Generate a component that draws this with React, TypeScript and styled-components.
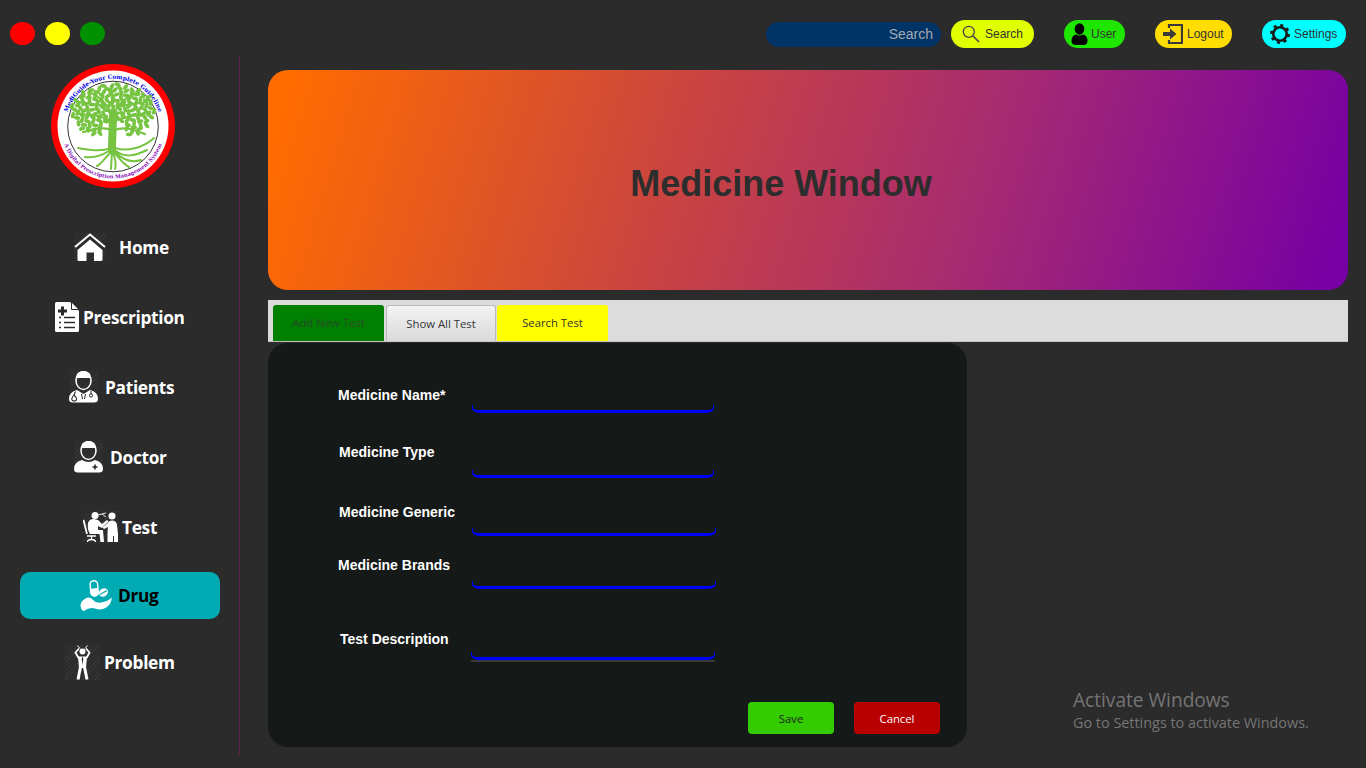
import React from "react";
import styled, { createGlobalStyle } from "styled-components";

const Global = createGlobalStyle`
  html, body { margin: 0; padding: 0; background: #2b2b2b; }
  * { box-sizing: border-box; }
`;

const Page = styled.div`
  position: relative;
  width: 1366px;
  height: 768px;
  overflow: hidden;
  background: #2b2b2b;
  font-family: "Liberation Sans", Arial, sans-serif;
`;

const TopBar = styled.header`
  display: flex;
  align-items: flex-start;
  height: 55px;
  padding: 20px 20px 0 10px;
`;

const Lights = styled.div`
  display: flex;
  gap: 10px;
  padding-top: 2px;
  margin-right: auto;
`;

const Light = styled.span<{ $color: string }>`
  display: block;
  width: 25px;
  height: 23px;
  border-radius: 50%;
  background: ${(p) => p.$color};
`;

const SearchField = styled.div`
  width: 175px;
  height: 25px;
  margin-top: 2px;
  padding-right: 8px;
  border-radius: 13px;
  background: #003366;
  color: #a3abb3;
  font-size: 14px;
  line-height: 25px;
  text-align: right;
`;

const Pill = styled.button<{ $bg: string; $width: number; $gap: number; $pad: number }>`
  display: flex;
  align-items: center;
  width: ${(p) => p.$width}px;
  height: 28px;
  margin-left: ${(p) => p.$gap}px;
  padding: 0 0 0 ${(p) => p.$pad}px;
  border: none;
  border-radius: 14px;
  background: ${(p) => p.$bg};
  color: #333333;
  font-family: "Liberation Sans", Arial, sans-serif;
  font-size: 12px;
`;

const PillIcon = styled.svg<{ $gap: number }>`
  flex: none;
  margin-right: ${(p) => p.$gap}px;
`;

const Body = styled.div`
  display: flex;
  height: 700px;
`;

const Sidebar = styled.aside`
  flex: none;
  display: flex;
  flex-direction: column;
  align-items: flex-start;
  width: 240px;
  height: 700px;
  padding: 9px 0 0 20px;
  border-right: 1px solid #5f2449;
`;

const LogoSvg = styled.svg`
  display: block;
  margin-left: 31px;
  margin-bottom: 36px;
`;

const NavItem = styled.a<{ $active?: boolean; $top: number; $pad: number; $gap: number }>`
  display: flex;
  align-items: center;
  width: 200px;
  height: 47px;
  margin-top: ${(p) => p.$top}px;
  padding-left: ${(p) => p.$pad}px;
  padding-bottom: 1px;
  gap: ${(p) => p.$gap}px;
  border-radius: 10px;
  background: ${(p) => (p.$active ? "#00abb3" : "transparent")};
  color: ${(p) => (p.$active ? "#000000" : "#ffffff")};
  font-family: "Open Sans", sans-serif;
  font-size: 17.3px;
  font-weight: 700;
  letter-spacing: -0.3px;
`;

const NavIconBox = styled.span<{ $hatch?: boolean }>`
  display: flex;
  flex: none;
  background: ${(p) =>
    p.$hatch
      ? "repeating-linear-gradient(135deg, #363636 0 1px, transparent 1px 3px)"
      : "none"};
`;

const Main = styled.main`
  flex: 1;
  padding: 15px 18px 0 28px;
`;

const Hero = styled.section`
  display: flex;
  align-items: center;
  justify-content: center;
  height: 220px;
  padding: 8px 54px 0 0;
  border-radius: 20px;
  background: linear-gradient(107deg, #ff6c00 2%, #cc463d 36%, #a62a72 66%, #7600a3 98%);
`;

const HeroTitle = styled.h1`
  margin: 0;
  color: #2d2d2d;
  font-family: "Liberation Sans", Arial, sans-serif;
  font-size: 36px;
  font-weight: 700;
`;

const TabStrip = styled.nav`
  display: flex;
  align-items: flex-end;
  height: 42px;
  margin-top: 10px;
  padding-left: 5px;
  background: #dcdcdc;
  border-bottom: 1px solid #c4c4c4;
`;

const Tab = styled.div<{ $variant: "green" | "plain" | "yellow" }>`
  width: ${(p) => (p.$variant === "plain" ? 110 : 111)}px;
  height: 36px;
  margin-right: ${(p) => (p.$variant === "green" ? 2 : 1)}px;
  border-radius: 3px 3px 0 0;
  border: ${(p) => (p.$variant === "plain" ? "1px solid #b9b9b9" : "none")};
  border-bottom: none;
  background: ${(p) =>
    p.$variant === "green"
      ? "#008000"
      : p.$variant === "yellow"
        ? "#ffff00"
        : "linear-gradient(#f3f3f3, #dadada)"};
  color: ${(p) => (p.$variant === "green" ? "#2a4a2a" : "#333333")};
  font-family: "Open Sans", sans-serif;
  font-size: 11.3px;
  line-height: 36px;
  text-align: center;
`;

const FormCard = styled.section`
  display: flex;
  flex-direction: column;
  width: 699px;
  height: 404px;
  margin-top: 1px;
  padding: 40px 27px 13px 0;
  border-radius: 20px;
  background: #151917;
`;

const FieldRow = styled.div<{ $top: number; $pad: number }>`
  display: flex;
  align-items: flex-start;
  height: 30px;
  margin-top: ${(p) => p.$top}px;
  padding-left: ${(p) => p.$pad}px;
`;

const FieldLabel = styled.label<{ $width: number; $nudge: number }>`
  flex: none;
  width: ${(p) => p.$width}px;
  margin-top: ${(p) => p.$nudge}px;
  color: #ffffff;
  font-size: 14px;
  font-weight: 700;
  line-height: 16px;
`;

const FieldBox = styled.div<{ $width: number; $rule?: boolean }>`
  position: relative;
  flex: none;
  width: ${(p) => p.$width}px;
  height: ${(p) => (p.$rule ? 32 : 30)}px;
  border-bottom: ${(p) => (p.$rule ? "2px solid #3a3a3a" : "none")};

  &::after {
    content: "";
    position: absolute;
    left: 0;
    right: 0;
    bottom: 0;
    height: 5px;
    border: 1px solid #0000ff;
    border-top: none;
    border-bottom-width: 3px;
    border-radius: 0 0 8px 8px / 0 0 5px 5px;
    pointer-events: none;
  }
`;

const FieldInput = styled.input`
  display: block;
  width: 100%;
  height: 27px;
  padding: 0;
  border: none;
  outline: none;
  background: transparent;
  color: #ffffff;
`;

const Actions = styled.div`
  display: flex;
  justify-content: flex-end;
  gap: 20px;
  margin-top: auto;
`;

const ActionButton = styled.button<{ $bg: string; $fg: string }>`
  width: 86px;
  height: 32px;
  border: none;
  border-radius: 4px;
  background: ${(p) => p.$bg};
  color: ${(p) => p.$fg};
  font-family: "Open Sans", sans-serif;
  font-size: 11.3px;
`;

const Watermark = styled.div`
  position: absolute;
  left: 1073px;
  top: 688px;
  color: #757575;
  font-family: "Open Sans", sans-serif;
  font-size: 14.4px;
  line-height: 20px;
`;

const WatermarkTitle = styled.div`
  font-size: 19.1px;
  line-height: 25px;
`;

const Logo = () => {
  const leaves: React.ReactElement[] = [];
  for (let i = 0; i < 150; i++) {
    const r = Math.sqrt(i / 150);
    const a = i * 2.39996;
    const x = 62 + r * 42 * Math.cos(a);
    const y = 47 + r * 27 * Math.sin(a);
    if (Math.abs(x - 62) < 12 && y > 58) continue;
    leaves.push(
      <ellipse
        key={i}
        cx={x}
        cy={y}
        rx={3.3}
        ry={1.9}
        transform={`rotate(${(i * 47) % 180} ${x} ${y})`}
        fill="#76c442"
      />
    );
  }
  return (
    <LogoSvg width={124} height={124} viewBox="0 0 124 124" role="img" aria-label="MediGuide logo">
      <circle cx={62} cy={62} r={62} fill="#ff0000" />
      <circle cx={62} cy={62} r={55.5} fill="#ffffff" />
      <circle cx={62} cy={62.5} r={45.3} fill="none" stroke="#000000" strokeWidth={0.8} />
      <defs>
        <path id="logoTop" d="M 16.3 49.4 A 47.5 47.5 0 0 1 107.7 49.4" />
        <path id="logoBottom" d="M 11.8 76 A 52 52 0 0 0 112.2 76" />
      </defs>
      <text fill="#0000e6" fontFamily="'DejaVu Serif', serif" fontSize={5.9} fontWeight={700}>
        <textPath href="#logoTop" startOffset="50%" textAnchor="middle">
          MediGuide-Your Complete Guideline
        </textPath>
      </text>
      <text fill="#8a12b8" fontFamily="'DejaVu Serif', serif" fontSize={5.2} fontWeight={700}>
        <textPath href="#logoBottom" startOffset="50%" textAnchor="middle">
          A Digital Prescription Management System
        </textPath>
      </text>
      <g fill="none" stroke="#76c442" strokeLinecap="round">
        <path d="M62 50 C 62 62 61 76 61 86" strokeWidth={8} />
        <path d="M62 58 C 52 52 40 50 26 50M62 58 C 72 52 86 52 98 48M61 50 C 56 40 48 32 38 28M63 50 C 68 38 76 32 88 28M62 48 L 60 24M56 42 L 28 38M68 42 L 96 38M61 66 C 52 62 42 66 32 68M63 66 C 74 62 84 66 94 70" strokeWidth={2.2} />
        <path d="M60 84 C 50 88 38 86 27 84M64 84 C 76 88 92 84 103 74M58 87 C 50 92 42 94 34 93M65 87 C 74 94 84 92 96 86M60 88 C 54 94 50 100 46 102M63 88 C 68 94 72 100 78 103M61 88 L 60 105M62 88 C 64 94 66 100 64 105M64 88 C 74 98 84 98 90 96" strokeWidth={2} />
      </g>
      {leaves}
    </LogoSvg>
  );
};

const HomeIcon = () => (
  <svg width={32} height={28} viewBox="0 0 32 28">
    <path d="M1 14 L16 1.5 L31 14" fill="none" stroke="#fff" strokeWidth={2} />
    <path d="M3.5 17 L16 6.5 L28.5 17 V26.5 Q28.5 28 27 28 H20 V19.5 H12.5 V28 H5 Q3.5 28 3.5 26.5 Z" fill="#fff" />
  </svg>
);

const RxIcon = () => (
  <svg width={24} height={30} viewBox="0 0 24 30">
    <path d="M1.5 0 H15 L24 9 V28.5 Q24 30 22.5 30 H1.5 Q0 30 0 28.5 V1.5 Q0 0 1.5 0 Z" fill="#fff" />
    <path d="M16 0.5 L23.5 8 H17 Q16 8 16 7 Z" fill="#2b2b2b" />
    <path d="M17 1 L23 7 H17 Z" fill="#fff" />
    <path d="M6 4.5 H9 V7.5 H12 V10.5 H9 V13.5 H6 V10.5 H3 V7.5 H6 Z" fill="#2b2b2b" />
    <path d="M4 15.5 H6 M9 15.5 H20 M4 20.5 H6 M9 20.5 H20 M4 25.5 H6 M9 25.5 H20" stroke="#2b2b2b" strokeWidth={1.3} />
  </svg>
);

const PatientIcon = () => (
  <svg width={29} height={32} viewBox="0 0 29 32">
    <path d="M7.5 5 Q7.5 0.5 14.5 0.5 Q21.5 0.5 21.5 5 V7 H7.5 Z" fill="#fff" />
    <ellipse cx={14.5} cy={9.5} rx={7.5} ry={9} fill="none" stroke="#fff" strokeWidth={1.5} />
    <path d="M0 28 Q0 21 8 19 L14.5 23 L21 19 Q29 21 29 28 Q29 31.5 25 31.5 H4 Q0 31.5 0 28 Z" fill="#fff" />
    <path d="M6.5 20.5 L5 24 M5 24 Q1.5 28 3.5 29.5 Q5 30.5 7 29.5 Q9 28 5 24" fill="none" stroke="#2b2b2b" strokeWidth={1.1} />
    <path d="M22 20 V23" stroke="#2b2b2b" strokeWidth={1.1} />
    <circle cx={22} cy={24.5} r={1.6} fill="none" stroke="#2b2b2b" strokeWidth={1} />
    <path d="M12.5 23 L13.5 28 M16.5 23 L15.5 28" stroke="#2b2b2b" strokeWidth={1} />
  </svg>
);

const DoctorIcon = () => (
  <svg width={29} height={32} viewBox="0 0 29 32">
    <path d="M7.5 5 Q7.5 0.5 14.5 0.5 Q21.5 0.5 21.5 5 V7 H7.5 Z" fill="#fff" />
    <ellipse cx={14.5} cy={9.5} rx={7.5} ry={9} fill="none" stroke="#fff" strokeWidth={1.5} />
    <path d="M0 28 Q0 21 8 19 Q14.5 23 21 19 Q29 21 29 28 Q29 31.5 25 31.5 H4 Q0 31.5 0 28 Z" fill="#fff" />
    <path d="M21 23.5 V28.5 M18.5 26 H23.5" stroke="#2b2b2b" strokeWidth={1.6} />
  </svg>
);

const TestIcon = () => (
  <svg width={36} height={32} viewBox="0 0 36 32">
    <path d="M0.5 9 L4 23" stroke="#fff" strokeWidth={1.8} />
    <circle cx={12} cy={4.5} r={3.5} fill="#fff" />
    <path d="M5 12 Q6 8 11 8 L15 9 L19 13 L24 9 L25.5 10.5 L19 17 L15 15 V19 H20 L21 31 H17.5 L16.5 23 H7 Q4 18 5 12 Z" fill="#fff" />
    <path d="M4 25 H13 M8.5 25 V28 M4.5 31 Q4.5 28.5 8.5 28.5 Q12.5 28.5 12.5 31" fill="none" stroke="#fff" strokeWidth={1.3} />
    <path d="M15 4 L23 2 M19 3 L23 6" stroke="#fff" strokeWidth={0.9} />
    <circle cx={29} cy={5} r={3.5} fill="#fff" />
    <path d="M25 12 Q25.5 9.5 29 9.5 Q33.5 9.5 34 14 L35 23 V31 H31 V25 H30 V31 H24.5 V21 L25 16 L21 18 L19.5 16.5 Z" fill="#fff" />
  </svg>
);

const DrugIcon = () => (
  <svg width={32} height={31} viewBox="0 0 32 31">
    <g transform="rotate(-5 13 9)">
      <rect x={10.5} y={0.8} width={7.5} height={15.5} rx={3.7} fill="none" stroke="#fff" strokeWidth={1.4} />
      <path d="M10.5 8.5 H18 V12.5 Q18 16.3 14.25 16.3 Q10.5 16.3 10.5 12.5 Z" fill="#fff" />
    </g>
    <ellipse cx={23.5} cy={12.5} rx={4.8} ry={4} transform="rotate(-35 23.5 12.5)" fill="#fff" />
    <path d="M20 14.5 L27 10.5" stroke="#00abb3" strokeWidth={1.2} />
    <path d="M0.7 27 Q0 22 4 19.5 Q9 15.5 13 20 Q16 23.5 21 22.5 Q28 21.5 31.8 17.5 Q31.5 23.5 27 27 Q22 31 15 28.5 Q9 27 4 31 Q1 30 0.7 27 Z" fill="#fff" />
  </svg>
);

const ProblemIcon = () => (
  <svg width={35} height={35} viewBox="0 0 35 35">
    <path d="M12.5 0.5 L15 3.5 M22.5 0.5 L20 3.5" stroke="#fff" strokeWidth={1} />
    <circle cx={17.5} cy={6.5} r={3} fill="#fff" />
    <path d="M14 3.5 L10.5 7.5 L13.5 13 M21 3.5 L24.5 7.5 L21.5 13" fill="none" stroke="#fff" strokeWidth={1.8} />
    <path d="M13 11.5 H22 L21 23 H14 Z" fill="#fff" />
    <path d="M15.5 22 L13 34.5 M19.5 22 L22 34.5" stroke="#fff" strokeWidth={3} />
    <path d="M17.5 11.5 L16.7 14 L17.5 20 L18.3 14 Z" fill="#2b2b2b" />
  </svg>
);

const navItems = [
  { label: "Home", top: 0, pad: 54, gap: 13, icon: <HomeIcon />, hatch: true },
  { label: "Prescription", top: 23, pad: 35, gap: 4, icon: <RxIcon /> },
  { label: "Patients", top: 23, pad: 49, gap: 7, icon: <PatientIcon />, hatch: true },
  { label: "Doctor", top: 23, pad: 54, gap: 7, icon: <DoctorIcon />, hatch: true },
  { label: "Test", top: 23, pad: 63, gap: 3, icon: <TestIcon />, hatch: true },
  { label: "Drug", top: 21, pad: 60, gap: 6, icon: <DrugIcon />, active: true },
  { label: "Problem", top: 20, pad: 45, gap: 4, icon: <ProblemIcon />, hatch: true },
];

const fields = [
  { label: "Medicine Name*", top: 0, pad: 70, labelWidth: 134, nudge: 4, width: 242 },
  { label: "Medicine Type", top: 35, pad: 71, labelWidth: 133, nudge: -4, width: 242 },
  { label: "Medicine Generic", top: 28, pad: 71, labelWidth: 133, nudge: -2, width: 244 },
  { label: "Medicine Brands", top: 23, pad: 70, labelWidth: 134, nudge: -2, width: 244 },
  { label: "Test Description", top: 41, pad: 72, labelWidth: 131, nudge: 1, width: 244, rule: true },
];

export default function App() {
  return (
    <Page>
      <Global />
      <TopBar>
        <Lights>
          <Light $color="#ff0000" />
          <Light $color="#ffff00" />
          <Light $color="#009000" />
        </Lights>
        <SearchField>Search</SearchField>
        <Pill $bg="#e0ff00" $width={83} $gap={10} $pad={11}>
          <PillIcon $gap={5} width={18} height={18} viewBox="0 0 18 18">
            <circle cx={6.8} cy={6.8} r={5.5} fill="none" stroke="#444" strokeWidth={1.3} />
            <path d="M10.8 10.8 L17 17" stroke="#444" strokeWidth={1.6} />
          </PillIcon>
          Search
        </Pill>
        <Pill $bg="#1fe600" $width={61} $gap={30} $pad={7}>
          <PillIcon $gap={3} width={17} height={22} viewBox="0 0 17 22">
            <ellipse cx={8.5} cy={6} rx={4.8} ry={5.8} fill="#000" />
            <path d="M0.5 18 Q0.5 12.5 5 11.5 Q8.5 13.5 12 11.5 Q16.5 12.5 16.5 18 Q16.5 22 12 22 H5 Q0.5 22 0.5 18 Z" fill="#000" />
          </PillIcon>
          User
        </Pill>
        <Pill $bg="#ffdd00" $width={77} $gap={30} $pad={8}>
          <PillIcon $gap={4} width={20} height={20} viewBox="0 0 20 20">
            <path d="M6 4 V1 H19 V19 H6 V16" fill="none" stroke="#3a3a3a" strokeWidth={2.2} />
            <path d="M0 8 H7 V4.5 L13.5 10 L7 15.5 V12 H0 Z" fill="#3a3a3a" />
          </PillIcon>
          Logout
        </Pill>
        <Pill $bg="#00ffff" $width={84} $gap={30} $pad={8}>
          <PillIcon $gap={4} width={20} height={20} viewBox="0 0 20 20">
            <circle cx={10} cy={10} r={6.7} fill="none" stroke="#1a1a1a" strokeWidth={2.6} />
            <circle cx={10} cy={10} r={8.6} fill="none" stroke="#1a1a1a" strokeWidth={2.8} strokeDasharray="3 3.75" />
          </PillIcon>
          Settings
        </Pill>
      </TopBar>
      <Body>
        <Sidebar>
          <Logo />
          {navItems.map((n) => (
            <NavItem key={n.label} $active={n.active} $top={n.top} $pad={n.pad} $gap={n.gap}>
              <NavIconBox $hatch={n.hatch}>{n.icon}</NavIconBox>
              {n.label}
            </NavItem>
          ))}
        </Sidebar>
        <Main>
          <Hero>
            <HeroTitle>Medicine Window</HeroTitle>
          </Hero>
          <TabStrip>
            <Tab $variant="green">Add New Test</Tab>
            <Tab $variant="plain">Show All Test</Tab>
            <Tab $variant="yellow">Search Test</Tab>
          </TabStrip>
          <FormCard>
            {fields.map((f) => (
              <FieldRow key={f.label} $top={f.top} $pad={f.pad}>
                <FieldLabel $width={f.labelWidth} $nudge={f.nudge}>
                  {f.label}
                </FieldLabel>
                <FieldBox $width={f.width} $rule={f.rule}>
                  <FieldInput aria-label={f.label} />
                </FieldBox>
              </FieldRow>
            ))}
            <Actions>
              <ActionButton $bg="#33cc00" $fg="#222222">Save</ActionButton>
              <ActionButton $bg="#b80000" $fg="#ffffff">Cancel</ActionButton>
            </Actions>
          </FormCard>
        </Main>
      </Body>
      <Watermark>
        <WatermarkTitle>Activate Windows</WatermarkTitle>
        Go to Settings to activate Windows.
      </Watermark>
    </Page>
  );
}
